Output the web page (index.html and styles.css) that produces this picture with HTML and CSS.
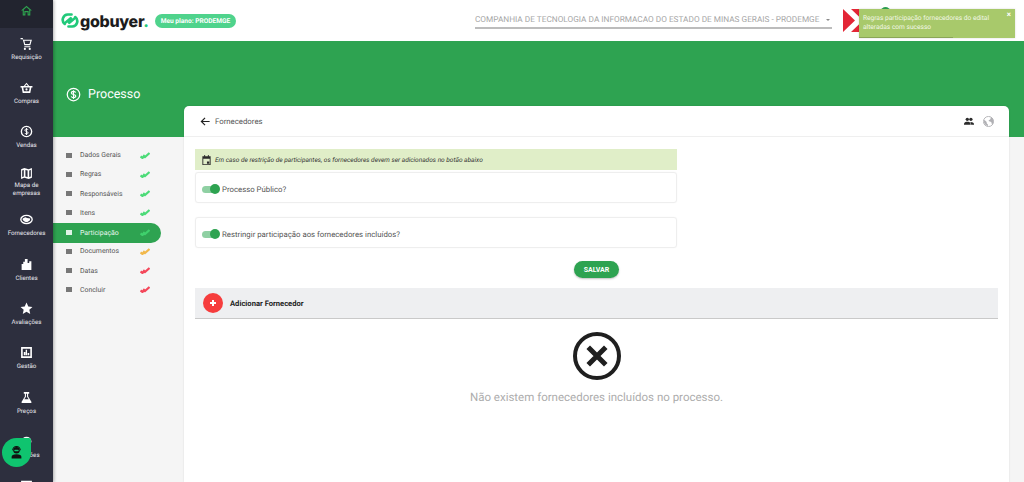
FILE: index.html
```html
<!DOCTYPE html>
<html lang="pt-BR">
<head>
  <meta charset="UTF-8">
  <title>gobuyer - Processo</title>
  <meta name="viewport" content="width=device-width, initial-scale=1.0">
  <link rel="stylesheet" href="styles.css">
</head>
<body>

<div id="page">
  <!-- menu lateral -->
  <nav class="sidebar">
    <div class="side-home">
      <svg width="13" height="13" viewBox="0 0 24 24"><path d="M12 3 2 12h3v9h5v-6h4v6h5v-9h3zm0 3 5 4.500V19h-1v-6H8v6H7v-8.500z" fill="#2ea44f"/></svg>
    </div>
    <a class="side-item">
      <svg width="13" height="13" viewBox="0 0 24 24"><path d="M1 2h4l1 3h16l-3 10H8L5 4H1zm7 5 1.500 6h8l1.700-6zM8 17h11v2H8zM9 20a2 2 0 1 1 0 4 2 2 0 0 1 0-4zm9 0a2 2 0 1 1 0 4 2 2 0 0 1 0-4z" fill="#fff"/></svg>
      <span>Requisição</span>
    </a>
    <a class="side-item">
      <svg width="13" height="13" viewBox="0 0 24 24"><path d="M12 3 7 9H1v3h2l2 10h14l2-10h2V9h-6zm0 3 2.500 3h-5zM6 12h12l-1.300 7H7.300z" fill="#fff"/><circle cx="12" cy="15.500" r="2" fill="#fff"/></svg>
      <span>Compras</span>
    </a>
    <a class="side-item">
      <svg width="13" height="13" viewBox="0 0 24 24"><circle cx="12" cy="12" r="9.500" fill="none" stroke="#fff" stroke-width="2.500"/><path d="M15 9c-.5-1-1.500-1.500-3-1.500S9 8.300 9 9.700c0 3 6 1.700 6 4.700 0 1.300-1.300 2.100-3 2.100s-2.600-.6-3.100-1.600M12 5.500v13" fill="none" stroke="#fff" stroke-width="1.800"/></svg>
      <span>Vendas</span>
    </a>
    <a class="side-item side-item-map">
      <svg width="13" height="13" viewBox="0 0 24 24"><path d="M2 4l6-2 8 2 6-2v18l-6 2-8-2-6 2zm2 2.500v12l3-1v-12zm6-1v12l4 1v-12zm7 1v12l3-1v-12z" fill="#fff"/></svg>
      <span>Mapa de<br>empresas</span>
    </a>
    <a class="side-item side-item-forn">
      <svg width="13" height="11" viewBox="0 0 24 20"><ellipse cx="12" cy="10" rx="10.500" ry="7.500" fill="none" stroke="#fff" stroke-width="2.500"/><path d="M5 8l5-2 3 1 6 1-1 4-5 3-4-1-4-3z" fill="#fff"/></svg>
      <span>Fornecedores</span>
    </a>
    <a class="side-item">
      <svg width="13" height="13" viewBox="0 0 24 24"><path d="M9 2h5v7h3V6h4v16H3V11h3V7h3z" fill="#fff"/></svg>
      <span>Clientes</span>
    </a>
    <a class="side-item">
      <svg width="13" height="13" viewBox="0 0 24 24"><path d="m12 1 3.300 7.300 7.700.8-5.800 5.200 1.700 7.700-6.900-4-6.900 4 1.700-7.700L1 9.100l7.700-.8z" fill="#fff"/></svg>
      <span>Avaliações</span>
    </a>
    <a class="side-item">
      <svg width="13" height="13" viewBox="0 0 24 24"><path d="M2 2h20v20H2zm3 3v14h14V5zM7 11h3v6H7zm3.500-4H13v10h-2.500zM14 13h3v4h-3z" fill="#fff"/></svg>
      <span>Gestão</span>
    </a>
    <a class="side-item">
      <svg width="13" height="13" viewBox="0 0 24 24"><path d="M7 2h10v3h-2v5l6 10v2H3v-2l6-10V5H7zm4 3v5.500L8 15h8l-3-4.500V5z" fill="#fff"/></svg>
      <span>Preços</span>
    </a>
    <a class="side-item">
      <svg width="13" height="13" viewBox="0 0 24 24"><circle cx="12" cy="12" r="9" fill="#fff"/></svg>
      <span>Cotações</span>
    </a>
    <a class="side-item">
      <svg width="13" height="13" viewBox="0 0 24 24"><path d="M2 3h20v18H2zm2.500 5v10.500h15V8z" fill="#fff"/></svg>
    </a>
  </nav>

  <div class="main">
    <header class="topbar">
      <div class="logo">
        <svg width="18" height="17" viewBox="0 0 24 22"><path d="M14 3H9a7 7 0 0 0-4 12.500M10 19h5a7 7 0 0 0 4-12.500M7 13l6-5M17 9l-6 5" fill="none" stroke="#21c97a" stroke-width="3.600" stroke-linecap="round"/></svg>
        <span class="logo-text">gobuyer<i>.</i></span>
      </div>
      <span class="plan">Meu plano: PRODEMGE</span>
      <div class="company">
        <span>COMPANHIA DE TECNOLOGIA DA INFORMACAO DO ESTADO DE MINAS GERAIS - PRODEMGE</span>
        <b class="caret"></b>
      </div>
      <div class="user-logo">
        <svg width="22" height="23" viewBox="0 0 22 23"><path d="M0 0 12 11.500 0 23zM8 0h14v23H8l12-11.500z" fill="#e32636"/></svg>
        <i class="user-dot"></i>
      </div>
    </header>

    <section class="hero">
      <svg width="15" height="15" viewBox="0 0 24 24"><circle cx="12" cy="12" r="10" fill="none" stroke="#fff" stroke-width="2"/><path d="M15.500 9c-.5-1.200-1.800-2-3.500-2-2 0-3.400 1-3.400 2.500 0 3.300 7 1.700 7 5 0 1.500-1.500 2.500-3.600 2.500-1.800 0-3.100-.8-3.600-2M12 5v14" fill="none" stroke="#fff" stroke-width="1.800"/></svg>
      <span>Processo</span>
    </section>

    <div class="content">
      <ul class="steps">
        <li class="step"><i class="dot"></i><span>Dados Gerais</span><svg class="chk" viewBox="0 0 10 7"><path d="M.5 4.500 2.500 6 4 4 5 5 9.500 1" fill="none" stroke="#4cdb78" stroke-width="2.200"/></svg></li>
        <li class="step"><i class="dot"></i><span>Regras</span><svg class="chk" viewBox="0 0 10 7"><path d="M.5 4.500 2.500 6 4 4 5 5 9.500 1" fill="none" stroke="#4cdb78" stroke-width="2.200"/></svg></li>
        <li class="step"><i class="dot"></i><span>Responsáveis</span><svg class="chk" viewBox="0 0 10 7"><path d="M.5 4.500 2.500 6 4 4 5 5 9.500 1" fill="none" stroke="#4cdb78" stroke-width="2.200"/></svg></li>
        <li class="step"><i class="dot"></i><span>Itens</span><svg class="chk" viewBox="0 0 10 7"><path d="M.5 4.500 2.500 6 4 4 5 5 9.500 1" fill="none" stroke="#4cdb78" stroke-width="2.200"/></svg></li>
        <li class="step step-active"><i class="dot"></i><span>Participação</span><svg class="chk" viewBox="0 0 10 7"><path d="M.5 4.500 2.500 6 4 4 5 5 9.500 1" fill="none" stroke="#3fd06c" stroke-width="2.200"/></svg></li>
        <li class="step"><i class="dot"></i><span>Documentos</span><svg class="chk" viewBox="0 0 10 7"><path d="M.5 4.500 2.500 6 4 4 5 5 9.500 1" fill="none" stroke="#f2b84b" stroke-width="2.200"/></svg></li>
        <li class="step"><i class="dot"></i><span>Datas</span><svg class="chk" viewBox="0 0 10 7"><path d="M.5 4.500 2.500 6 4 4 5 5 9.500 1" fill="none" stroke="#f4475a" stroke-width="2.200"/></svg></li>
        <li class="step"><i class="dot"></i><span>Concluir</span><svg class="chk" viewBox="0 0 10 7"><path d="M.5 4.500 2.500 6 4 4 5 5 9.500 1" fill="none" stroke="#f4475a" stroke-width="2.200"/></svg></li>
      </ul>

      <div class="card">
        <div class="card-head">
          <svg width="11" height="11" viewBox="0 0 24 24"><path d="M21 12H4M11 4l-8 8 8 8" fill="none" stroke="#222" stroke-width="2.600"/></svg>
          <span class="card-title">Fornecedores</span>
          <div class="card-tools">
            <svg width="10" height="10" viewBox="0 0 24 24"><circle cx="8" cy="8" r="4" fill="#2b2b2b"/><circle cx="16.500" cy="8" r="4" fill="#2b2b2b"/><path d="M0 19c0-3.500 4-5 8-5s8 1.500 8 5v2H0zM17 21v-2c0-2-1-3.500-2.500-4.700 4-.6 9.500 1 9.500 4.700v2z" fill="#2b2b2b"/></svg>
            <svg width="11" height="11" viewBox="0 0 24 24"><circle cx="12" cy="12" r="11" fill="none" stroke="#b0b0b4" stroke-width="2"/><path d="M3 8l5 5v3l3 3v3a10 10 0 0 1-8-14zM14 2l3 2-1 3-3 2-1 2 3 1 3 1 1 4 2 1 2-6-2-7z" fill="#b0b0b4"/></svg>
          </div>
        </div>

        <div class="card-body">
          <div class="form-col">
            <div class="notice">
              <svg width="11" height="12" viewBox="0 0 24 24"><path d="M3 4h4V1h2v3h6V1h2v3h4v19H3zm2 5v12h14V9zm8 6h5v5h-5z" fill="#2b2b2b"/></svg>
              <em>Em caso de restrição de participantes, os fornecedores devem ser adicionados no botão abaixo</em>
            </div>
            <div class="toggle-box">
              <span class="toggle"><i></i></span>
              <label>Processo Público?</label>
            </div>
            <div class="toggle-box toggle-box-2">
              <span class="toggle"><i></i></span>
              <label>Restringir participação aos fornecedores incluídos?</label>
            </div>
            <div class="save-row"><button class="save">SALVAR</button></div>
          </div>

          <div class="add-bar">
            <span class="add-btn"></span>
            <strong>Adicionar Fornecedor</strong>
          </div>

          <div class="empty">
            <svg width="48" height="48" viewBox="0 0 48 48"><circle cx="24" cy="24" r="22" fill="none" stroke="#1f1f1f" stroke-width="4"/><path d="M17 17l14 14M31 17 17 31" stroke="#1f1f1f" stroke-width="5" stroke-linecap="square"/></svg>
            <p>Não existem fornecedores incluídos no processo.</p>
          </div>
        </div>
      </div>
    </div>
  </div>

  <div class="toast">
    <span class="toast-close">×</span>
    <p>Regras participação fornecedores do edital alteradas com sucesso</p>
    <i class="toast-bar"></i>
  </div>

  <div class="chat-fab">
    <svg width="13" height="13" viewBox="0 0 24 24"><circle cx="12" cy="8" r="6" fill="#111"/><path d="M5 8a7 7 0 0 1 14 0" fill="none" stroke="#111" stroke-width="2"/><path d="M3 23v-3c0-3 3-5 9-5s9 2 9 5v3z" fill="#111"/><rect x="8" y="7" width="8" height="2.500" rx="1" fill="#0fc46f"/></svg>
  </div>
</div>

</body>
</html>
```

FILE: styles.css
```css
* { margin: 0; padding: 0; box-sizing: border-box; }
html, body {
  height: 100%;
  width: 100%;
  font-family: "Roboto", "Liberation Sans", sans-serif;
  text-rendering: geometricPrecision;
  overflow: hidden;
}

#page {
  position: relative;
  display: flex;
  width: 100vw;
  height: 100vh;
  overflow: hidden;
  background: #f5f5f5;
}

/* menu lateral */
.sidebar {
  flex: 0 0 53px;
  height: 100%;
  overflow: hidden;
  background: #2d2f3e;
  box-shadow: 1px 0 3px rgba(0, 0, 0, 0.3);
  color: #fff;
  z-index: 2;
}

.side-home {
  display: flex;
  justify-content: center;
  padding-top: 4px;
  height: 28px;
  background: #22242f;
}

.side-item {
  display: flex;
  flex-direction: column;
  align-items: center;
  height: 44.2px;
  padding-top: 9px;
  font-size: 6.2px;
  line-height: 8px;
  text-align: center;
  color: #e8e8ee;
}

.side-item span { margin-top: 3px; white-space: nowrap; }
.side-item-map { padding-top: 6px; }
.side-item-map span { margin-top: 1px; }
.side-item-forn { padding-top: 9px; }
.side-item-forn span { margin-top: 4px; }

.main { flex: 1; min-width: 0; display: flex; flex-direction: column; }

/* topo */
.topbar {
  flex: 0 0 41px;
  display: flex;
  align-items: center;
  padding-left: 8px;
  background: #fff;
}

.logo { display: flex; align-items: center; gap: 1px; }

.logo-text {
  font-family: "Inter", "Liberation Sans", sans-serif;
  font-size: 16px;
  font-weight: 800;
  letter-spacing: -0.3px;
  color: #1c1c1c;
}

.logo-text i { font-style: normal; color: #21c97a; }

.plan {
  margin-left: 6px;
  padding: 0 6px;
  height: 14px;
  line-height: 14px;
  border-radius: 7px;
  background: #4fd38c;
  color: #fff;
  font-size: 6.600px;
  font-weight: 700;
  white-space: nowrap;
}

.company {
  display: flex;
  align-items: center;
  justify-content: space-between;
  width: 357px;
  height: 16px;
  margin-left: auto;
  margin-top: 1px;
  border-bottom: 2px solid #bcbcbc;
  color: #a6a6a6;
  font-size: 8.250px;
  white-space: nowrap;
}

.caret {
  margin-right: 2px;
  border: 2.500px solid transparent;
  border-top-color: #8a8a8a;
  border-bottom: 0;
}

.user-logo { position: relative; display: flex; margin: 0 159px 0 11px; }

.user-dot {
  position: absolute;
  top: -2px;
  left: 38px;
  width: 9px;
  height: 9px;
  border-radius: 50%;
  background: #2ea351;
}

/* faixa verde */
.hero {
  flex: 0 0 96px;
  display: flex;
  align-items: center;
  gap: 7px;
  padding: 10px 0 0 13px;
  background: #2ea351;
  color: #fff;
  font-size: 12.500px;
}

.content { flex: 1; display: flex; min-height: 0; }

/* passos */
.steps { flex: 0 0 131px; list-style: none; padding-top: 8.500px; }

.step {
  display: flex;
  align-items: center;
  width: 108px;
  height: 19.25px;
  padding-left: 13px;
  color: #555;
  font-size: 6.900px;
}

.step span { flex: 1; margin-left: 8px; }

.dot { width: 6px; height: 5px; background: #777; }
.chk { width: 10px; height: 7px; margin-right: 11px; }

.step-active {
  height: 20px;
  margin-bottom: -0.750px;
  border-radius: 0 10px 10px 0;
  background: #2ea351;
  color: #e9f7ee;
}

.step-active .dot { background: #dff3e6; }

/* card */
.card {
  flex: 0 0 825px;
  margin-top: -31px;
  border-radius: 5px 5px 0 0;
  background: #fff;
  box-shadow: 0 0 2px rgba(0, 0, 0, 0.12);
}

.card-head {
  display: flex;
  align-items: center;
  height: 31px;
  padding: 0 15px 0 16px;
  border-bottom: 1px solid #efefef;
  color: #555;
  font-size: 7.800px;
}

.card-title { margin-left: 4px; }
.card-tools { display: flex; align-items: center; gap: 9px; margin-left: auto; }

.card-body { padding: 12px 11px 0; }
.form-col { width: 482px; }

.notice {
  display: flex;
  align-items: center;
  gap: 3px;
  height: 21px;
  padding-left: 6px;
  background: #e0eec8;
  color: #333;
  font-size: 6.500px;
}

.toggle-box {
  display: flex;
  align-items: center;
  gap: 3px;
  height: 31px;
  margin-top: 2px;
  padding: 3px 0 0 6px;
  border: 1px solid #eeeeee;
  border-radius: 3px;
  color: #555;
  font-size: 7.800px;
  box-shadow: 0 0 1px rgba(0, 0, 0, 0.08);
}

.toggle-box-2 { margin-top: 14px; }

.toggle {
  position: relative;
  width: 17px;
  height: 7px;
  border-radius: 4px;
  background: #8fd0a3;
}

.toggle i {
  position: absolute;
  top: -1.500px;
  right: -1px;
  width: 10px;
  height: 10px;
  border-radius: 50%;
  background: #2ea351;
}

.save-row { display: flex; padding: 13px 0 10px 379px; }

.save {
  width: 45px;
  height: 17px;
  border: none;
  border-radius: 9px;
  background: #2ea351;
  color: #fff;
  font-family: inherit;
  font-size: 7px;
  font-weight: 700;
  box-shadow: 0 1px 2px rgba(0, 0, 0, 0.25);
}

.add-bar {
  display: flex;
  align-items: center;
  gap: 7px;
  height: 31px;
  padding-left: 8px;
  background: #eeeff1;
  border-bottom: 1px solid #c9c9c9;
  color: #222;
  font-size: 7.600px;
}

.add-btn {
  position: relative;
  width: 20px;
  height: 20px;
  border-radius: 50%;
  background: #f63d3d;
}

.add-btn::before, .add-btn::after {
  content: "";
  position: absolute;
  background: #fff;
}

.add-btn::before { left: 7px; top: 9.250px; width: 6px; height: 1.500px; }
.add-btn::after { left: 9.250px; top: 7px; width: 1.500px; height: 6px; }

.empty {
  display: flex;
  flex-direction: column;
  align-items: center;
  padding-top: 13px;
  color: #adadad;
  font-size: 11.500px;
}

.empty p { margin-top: 10px; }

/* aviso flutuante */
.toast {
  position: absolute;
  top: 9px;
  left: 859px;
  width: 156px;
  height: 29px;
  padding: 4.500px 20px 0 4px;
  background: #a8c96b;
  color: #f4f8e8;
  font-size: 6.600px;
  line-height: 9.500px;
  box-shadow: 0 0 2px rgba(0, 0, 0, 0.15);
  z-index: 4;
}

.toast-close {
  position: absolute;
  top: 1px;
  right: 4px;
  color: #fff;
  font-size: 8px;
  font-weight: 700;
}

.toast-bar {
  position: absolute;
  left: 0;
  bottom: 0;
  width: 94px;
  height: 1px;
  background: #8aa657;
}

.chat-fab {
  position: absolute;
  left: 2px;
  top: 438px;
  width: 29px;
  height: 29px;
  display: flex;
  align-items: center;
  justify-content: center;
  border-radius: 50% 2px 50% 50%;
  background: #0fc46f;
  z-index: 5;
}
```
